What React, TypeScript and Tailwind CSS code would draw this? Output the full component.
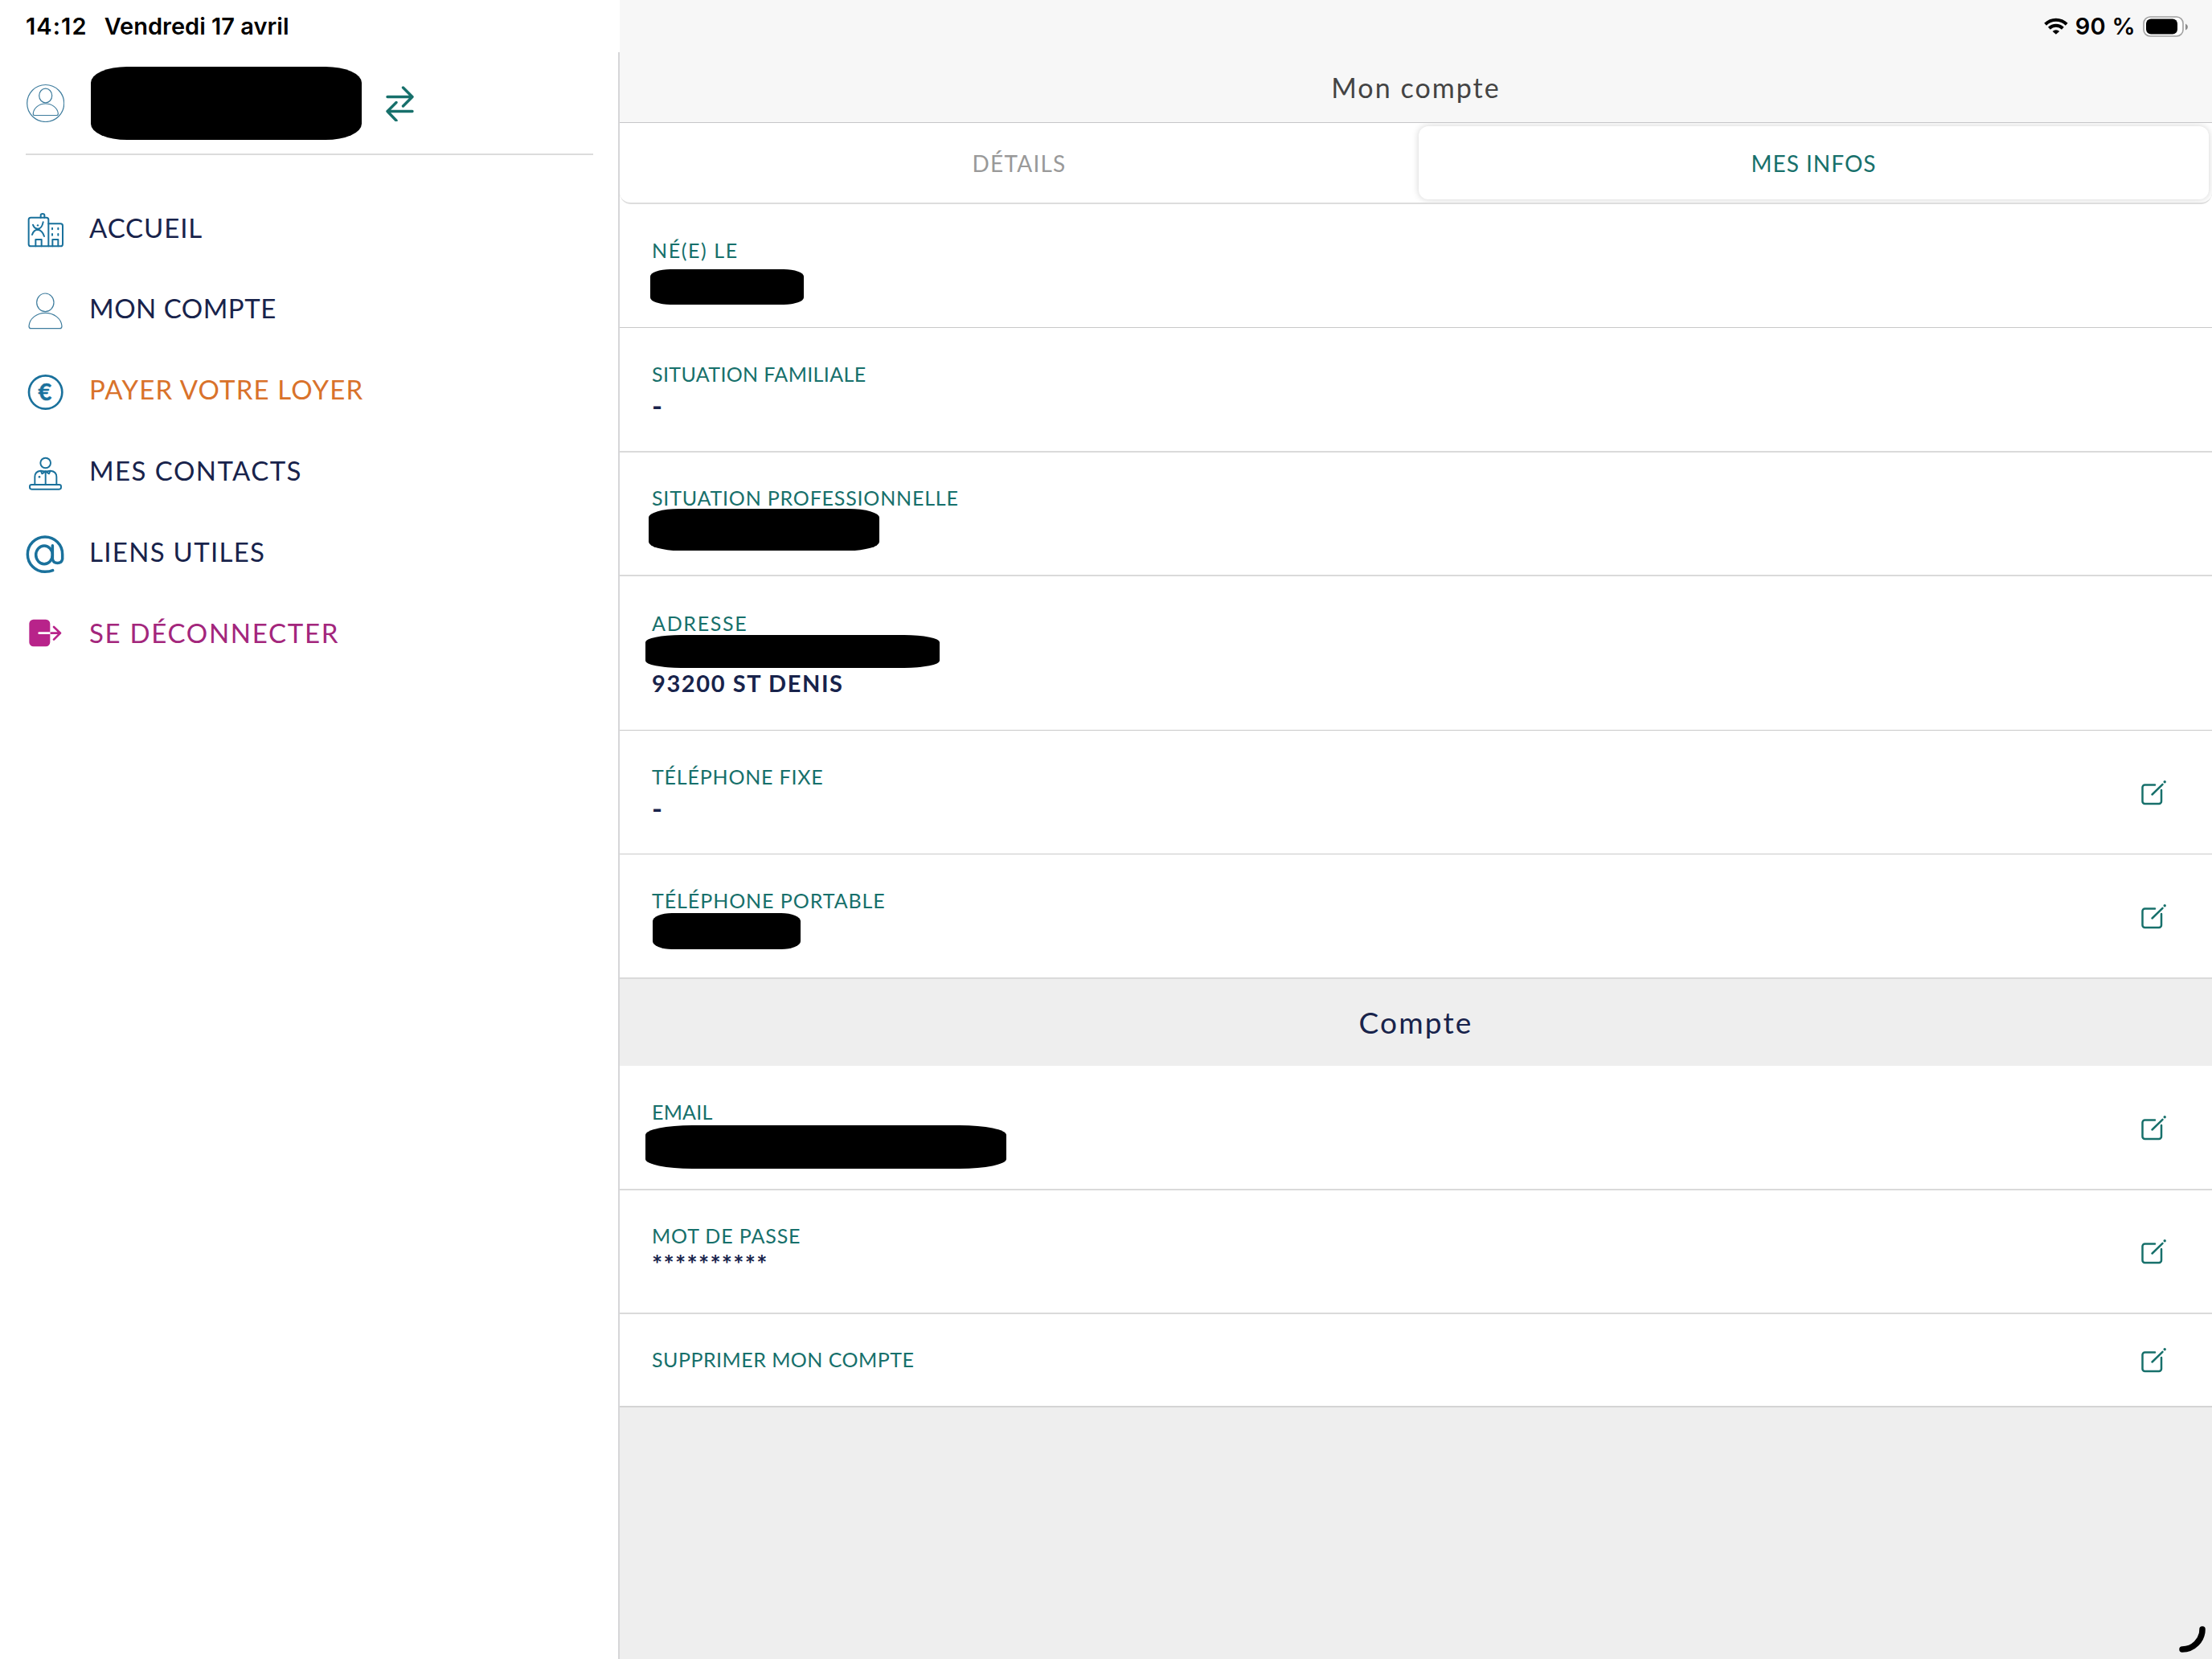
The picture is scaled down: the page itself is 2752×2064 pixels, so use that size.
import type { ReactNode } from "react";
import clsx from "clsx";

type MenuItem = {
  label: string;
  icon: ReactNode;
  className: string;
};

type Field = {
  label: string;
  labelClass?: string;
  value?: string;
  extra?: string;
  valueClass?: string;
  // size and place of the bar that hides a private value
  mask?: string;
  editable?: boolean;
  className: string;
};

const HomeIcon = () => (
  <svg viewBox="0 0 144 144" className="size-12 overflow-visible" fill="none" stroke="#1a719c" strokeWidth="6" strokeLinecap="round" strokeLinejoin="round">
    <path d="M19 35H77a8 8 0 0 1 8 8V142H19a8 8 0 0 1-8-8V43a8 8 0 0 1 8-8Z" />
    <path d="M56 35V26q0-5 7-5t7 5V35" />
    <path d="M85 58H130a8 8 0 0 1 8 8V134a8 8 0 0 1-8 8H85" />
    <path d="M37 142V117H59V142M100 142V117H121V142" />
    <path d="M99 74V79M121 74V79M99 96V101M121 96V101" />
    <path d="M27 62Q32 77 45 77Q60 77 65 52M24 99Q30 80 45 80Q62 82 69 105" />
    <circle cx="45" cy="64" r="3.500" fill="#1a719c" stroke="none" />
  </svg>
);

const UserIcon = () => (
  <svg viewBox="0 0 144 144" className="size-12 overflow-visible" fill="none" stroke="#3f7d9e" strokeWidth="3.6">
    <ellipse cx="73" cy="49" rx="32" ry="34" />
    <path d="M20 146q-8 0-8-9C14 108 42 88 73 88S133 108 135 137q0 9-8 9Z" />
  </svg>
);

const EuroIcon = () => (
  <svg viewBox="0 0 144 144" className="size-12 overflow-visible">
    <circle cx="74" cy="81" r="62" fill="none" stroke="#1a719c" strokeWidth="8" />
    <text x="72" y="112" textAnchor="middle" fill="#1a719c" stroke="#1a719c" strokeWidth="1.500" fontSize="87" fontWeight="700" fontFamily="Lato, sans-serif">
      €
    </text>
  </svg>
);

const ContactIcon = () => (
  <svg viewBox="0 0 144 144" className="size-12 overflow-visible" fill="none" stroke="#1a719c" strokeWidth="5.800" strokeLinejoin="round">
    <circle cx="74" cy="42" r="19" />
    <path d="M34 122V94Q34 73 56 71L61 82L74 73L87 82L92 71Q115 73 115 94V122" />
    <path d="M56 71Q74 76 92 71M74 73V122" />
    <rect x="15" y="123" width="117" height="17" rx="7" />
    <circle cx="51" cy="94" r="4" fill="#1a719c" stroke="none" />
  </svg>
);

const LinksIcon = () => (
  <svg viewBox="0 0 144 144" className="size-12 overflow-visible" fill="none" stroke="#1a719c" strokeWidth="10.500" strokeLinecap="round">
    <ellipse cx="69" cy="82" rx="31" ry="34" />
    <path d="M100 47V98a19 19 0 0 0 37 0V80a65 65 0 1 0-65 65q18 0 29-5" />
  </svg>
);

const LogoutIcon = () => (
  <svg viewBox="0 0 144 144" className="size-12 overflow-visible" fill="none" strokeWidth="8" strokeLinecap="round" strokeLinejoin="round">
    <rect x="13" y="23" width="78" height="101" rx="16" fill="#b8238a" />
    <path d="M50 74H91" stroke="#fff" />
    <path d="M95 74H129M105 51L129 74L105 98" stroke="#b8238a" />
  </svg>
);

const AvatarIcon = () => (
  <svg viewBox="0 0 48 48" className="size-12" fill="none" stroke="#3f7d9e" strokeWidth="1.2">
    <circle cx="24.700" cy="24.500" r="23" />
    <ellipse cx="24.700" cy="15" rx="8" ry="8.800" />
    <path d="M11 39.500q-2 0-1.700-2.500C10 30 17 25 24.700 25S39.500 30 40.300 37q.2 2.500-1.800 2.500Z" />
  </svg>
);

const SwapIcon = () => (
  <svg viewBox="0 0 36 44" className="h-11 w-9" fill="none" stroke="#17706b" strokeWidth="3.400" strokeLinecap="round" strokeLinejoin="round">
    <path d="M3 13.500H34M22.500 2L34 13.500L22.500 25" />
    <path d="M34 31.500H3M14 20.500L3 31.500L14 43" />
  </svg>
);

const EditIcon = () => (
  <svg viewBox="0 0 40 40" className="size-10" fill="none" stroke="#17706b" strokeWidth="2.500" strokeLinecap="round">
    <path d="M21 10.500H8.500a3 3 0 0 0-3 3V31a3 3 0 0 0 3 3H26a3 3 0 0 0 3-3V17" />
    <path d="M17.500 22.500L30.500 9.800" />
    <circle cx="33.200" cy="6.700" r="1.700" fill="#17706b" stroke="none" />
  </svg>
);

const menu: MenuItem[] = [
  { label: "ACCUEIL", icon: <HomeIcon />, className: "text-[#18234b] tracking-[0.9px]" },
  { label: "MON COMPTE", icon: <UserIcon />, className: "text-[#18234b] tracking-[0.5px]" },
  { label: "PAYER VOTRE LOYER", icon: <EuroIcon />, className: "text-[#d9722b] tracking-[1.15px]" },
  { label: "MES CONTACTS", icon: <ContactIcon />, className: "text-[#18234b] tracking-[1.45px]" },
  { label: "LIENS UTILES", icon: <LinksIcon />, className: "text-[#18234b] tracking-[1.3px]" },
  { label: "SE DÉCONNECTER", icon: <LogoutIcon />, className: "text-[#a3267c] tracking-[1.7px]" },
];

const infos: Field[] = [
  {
    label: "NÉ(E) LE",
    labelClass: "tracking-[1.6px]",
    mask: "-ml-[2px] mt-[4px] h-[44px] w-[191px] rounded-[25px/9px]",
    className: "h-[154px] border-b border-[#c9c9c9]",
  },
  {
    label: "SITUATION FAMILIALE",
    labelClass: "tracking-[0.36px]",
    value: "-",
    valueClass: "text-[35px]",
    className: "h-[155px] border-b-2 border-[#dadada]",
  },
  {
    label: "SITUATION PROFESSIONNELLE",
    labelClass: "tracking-[0.8px]",
    mask: "-ml-[4px] -mt-[6px] h-[52px] w-[287px] rounded-[38px/11px]",
    className: "h-[154px] border-b-2 border-[#dadada]",
  },
  {
    label: "ADRESSE",
    labelClass: "tracking-[1.7px]",
    mask: "-ml-[8px] -mt-[5px] h-[41px] w-[366px] rounded-[44px/9px]",
    extra: "93200 ST DENIS",
    className: "h-[192px] border-b border-[#c9c9c9]",
  },
  {
    label: "TÉLÉPHONE FIXE",
    labelClass: "tracking-[0.8px]",
    value: "-",
    valueClass: "text-[35px]",
    editable: true,
    className: "h-[154px] border-b border-[#c9c9c9]",
  },
  {
    label: "TÉLÉPHONE PORTABLE",
    labelClass: "tracking-[0.93px]",
    mask: "ml-[1px] -mt-[4px] h-[45px] w-[184px] rounded-[24px/10px]",
    editable: true,
    className: "h-[155px] border-b-2 border-[#dadada]",
  },
];

const account: Field[] = [
  {
    label: "EMAIL",
    labelClass: "tracking-[0.2px]",
    mask: "-ml-[8px] -mt-[3px] h-[54px] w-[449px] rounded-[58px/12px]",
    editable: true,
    className: "h-[155px] border-b-2 border-[#dadada]",
  },
  {
    label: "MOT DE PASSE",
    labelClass: "tracking-[0.87px]",
    value: "**********",
    valueClass: "relative -top-[4px] text-[31px] tracking-[1.3px]",
    editable: true,
    className: "h-[154px] border-b-2 border-[#dadada]",
  },
  {
    label: "SUPPRIMER MON COMPTE",
    labelClass: "tracking-[0.48px]",
    editable: true,
    className: "h-[116px] border-b-2 border-[#d4d4d4]",
  },
];

function FieldRow({ field }: { field: Field }) {
  return (
    <div className={clsx("flex items-center justify-between bg-white pl-10 pr-[52px]", field.className)}>
      <div>
        <div className={clsx("-mt-px mb-px text-[25px] leading-[38px] text-[#17706b]", field.labelClass)}>{field.label}</div>
        {field.value && (
          <div className={clsx("leading-[38px] font-bold text-[#18234b]", field.valueClass)}>{field.value}</div>
        )}
        {field.mask && (
          <div className="flex h-[38px] items-start">
            <div className={clsx("shrink-0 bg-black", field.mask)} />
          </div>
        )}
        {field.extra && (
          <div className="-mt-px text-[29px] leading-[36px] font-bold tracking-[1.6px] text-[#18234b]">{field.extra}</div>
        )}
      </div>
      {field.editable && <EditIcon />}
    </div>
  );
}

function Sidebar() {
  return (
    <aside className="w-[769px] shrink-0 bg-white">
      <div className="flex h-[65px] items-center gap-[21px] pl-8 font-[Inter] text-[29px] font-semibold text-black">
        <span className="tracking-[1.1px]">14:12</span>
        <span>Vendredi 17 avril</span>
      </div>
      <div className="ml-8 flex h-[128px] w-[706px] items-center border-b-2 border-[#dcdcdc]">
        <AvatarIcon />
        <div className="mt-px ml-[33px] h-[91px] w-[337px] rounded-[45px/20px] bg-black" />
        <div className="mt-px ml-[29px]">
          <SwapIcon />
        </div>
      </div>
      <nav className="mt-10 ml-8">
        {menu.map((item) => (
          <div key={item.label} className={clsx("flex h-[100.8px] items-center gap-[31px] text-[33px]", item.className)}>
            {item.icon}
            <span>{item.label}</span>
          </div>
        ))}
      </nav>
    </aside>
  );
}

function StatusIcons() {
  return (
    <div className="flex h-[65px] items-center justify-end border-l-2 border-white bg-[#f7f7f7] pr-[28px] font-[Inter] text-[29px] font-semibold text-black">
      <svg viewBox="0 0 30 21" className="h-[21px] w-[30px]" fill="none" stroke="#000" strokeWidth="4">
        <path d="M1.600 8.200A19 19 0 0 1 28.200 8.200M6.400 13.200A12.200 12.200 0 0 1 23.400 13.200" />
        <path d="M14.900 20.800L10.600 17a6 6 0 0 1 8.600 0Z" fill="#000" stroke="none" />
      </svg>
      <span className="ml-[9px] tracking-[0.3px]">90 %</span>
      <svg viewBox="0 0 58 26" className="ml-[9px] h-[26px] w-[58px]">
        <rect x="1" y="1" width="49" height="24" rx="8" fill="#fff" stroke="#a0a0a0" strokeWidth="1.600" />
        <rect x="4" y="3.500" width="39" height="19" rx="6" fill="#000" />
        <path d="M53 9.500q3 1.500 3 4t-3 4Z" fill="#8c8c8c" />
      </svg>
    </div>
  );
}

export default function App() {
  return (
    <div className="relative flex h-[2064px] w-[2752px] overflow-hidden bg-white font-[Lato,sans-serif]">
      <Sidebar />
      <main className="flex flex-1 flex-col">
        <StatusIcons />
        <div className="flex flex-1 flex-col border-l-2 border-[#d6d6d8] bg-[#eeeeee]">
          <header className="flex h-[88px] items-center justify-center border-b border-[#c6c6c8] bg-[#f7f7f7] text-[34px] tracking-[2.05px] text-[#444444]">
            <h1>Mon compte</h1>
          </header>

          {/* Tabs */}
          <div className="bg-white">
            <div className="flex h-[101px] overflow-hidden rounded-b-[14px] border-b-2 border-[#dddddd] text-[28px]">
              <button className="w-[994px] tracking-[1.2px] text-[#999999]">DÉTAILS</button>
              <button className="mt-[4px] mr-[4px] mb-[4px] flex-1 rounded-[12px] bg-white tracking-[1px] text-[#17706b] shadow-[0_0_8px_rgba(0,0,0,0.18)]">
                MES INFOS
              </button>
            </div>
          </div>

          {infos.map((field) => (
            <FieldRow key={field.label} field={field} />
          ))}
          <h2 className="flex h-[108px] items-center justify-center text-[37px] tracking-[2.2px] text-[#18234b]">Compte</h2>
          {account.map((field) => (
            <FieldRow key={field.label} field={field} />
          ))}
        </div>
      </main>

      {/* Loader caught in the screen corner */}
      <svg viewBox="0 0 40 40" className="absolute right-[4px] bottom-[4px] size-10" fill="none" stroke="#000" strokeWidth="7.500" strokeLinecap="round">
        <path d="M32 7A25 25 0 0 1 7 32" />
      </svg>
    </div>
  );
}
